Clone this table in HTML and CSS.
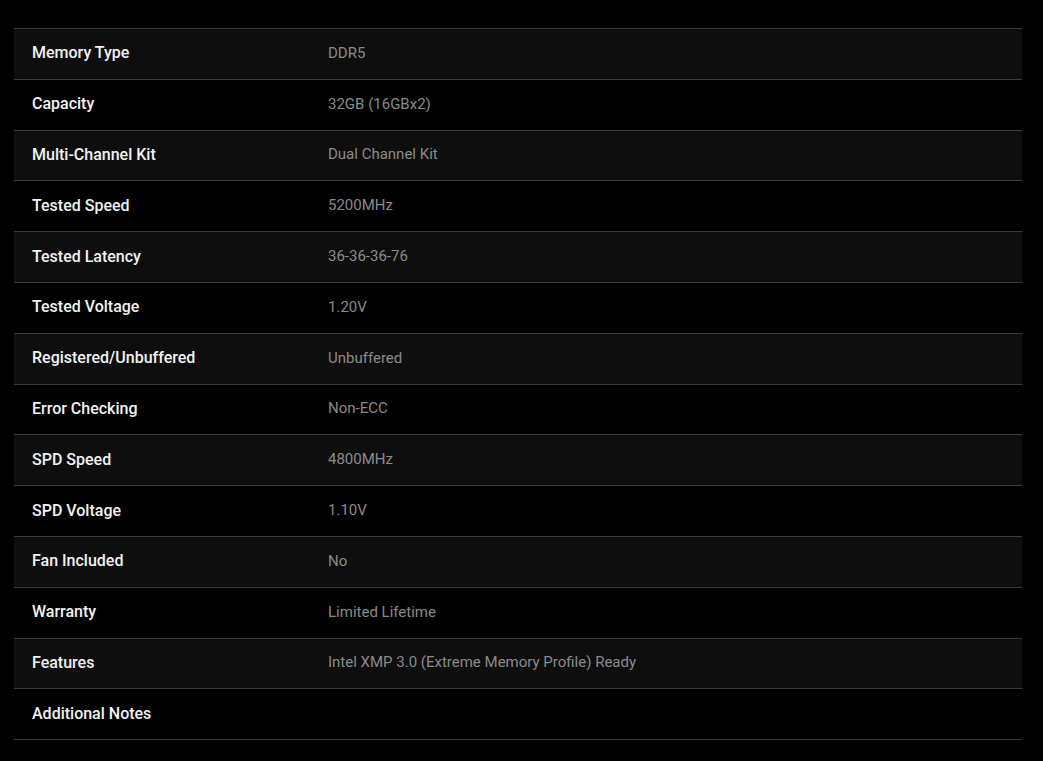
FILE: index.html
```html
<!DOCTYPE html>
<html>
<head>
<meta charset="utf-8">
<link rel="stylesheet" href="styles.css">
</head>
<body>
<div class="specs">
  <div class="row odd"><div class="label">Memory Type</div><div class="value">DDR5</div></div>
  <div class="row"><div class="label">Capacity</div><div class="value">32GB (16GBx2)</div></div>
  <div class="row odd"><div class="label">Multi-Channel Kit</div><div class="value">Dual Channel Kit</div></div>
  <div class="row"><div class="label">Tested Speed</div><div class="value">5200MHz</div></div>
  <div class="row odd"><div class="label">Tested Latency</div><div class="value">36-36-36-76</div></div>
  <div class="row"><div class="label">Tested Voltage</div><div class="value">1.20V</div></div>
  <div class="row odd"><div class="label">Registered/Unbuffered</div><div class="value">Unbuffered</div></div>
  <div class="row"><div class="label">Error Checking</div><div class="value">Non-ECC</div></div>
  <div class="row odd"><div class="label">SPD Speed</div><div class="value">4800MHz</div></div>
  <div class="row"><div class="label">SPD Voltage</div><div class="value">1.10V</div></div>
  <div class="row odd"><div class="label">Fan Included</div><div class="value">No</div></div>
  <div class="row"><div class="label">Warranty</div><div class="value">Limited Lifetime</div></div>
  <div class="row odd"><div class="label">Features</div><div class="value">Intel XMP 3.0 (Extreme Memory Profile) Ready</div></div>
  <div class="row"><div class="label">Additional Notes</div><div class="value"></div></div>
</div>
</body>
</html>
```
FILE: styles.css
```css
html, body {
  margin: 0;
  padding: 0;
  background: #000;
}
body {
  padding: 28px 21px 0 14px;
  font-family: Roboto, "Liberation Sans", sans-serif;
}
.specs {
  display: flex;
  flex-direction: column;
  border-bottom: 1px solid #3a3a3a;
}
.row {
  display: grid;
  grid-template-columns: 314px 1fr;
  align-items: center;
  height: 49.8px;
  border-top: 1px solid #3a3a3a;
  background: #000;
}
.row.odd {
  background: #0e0e0e;
}
.label {
  padding-left: 18px;
  color: #f2f2f2;
  font-size: 16px;
  font-weight: 500;
  margin-top: -2px;
}
.value {
  color: #8a8a8a;
  font-size: 15px;
  margin-top: -2px;
}
```
